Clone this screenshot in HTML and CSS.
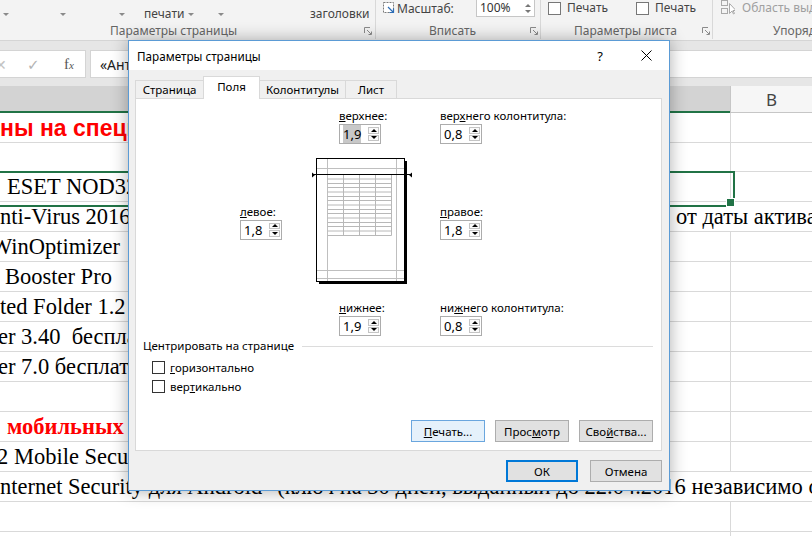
FILE: index.html
```html
<!DOCTYPE html>
<html lang="ru">
<head>
<meta charset="utf-8">
<title>Параметры страницы</title>
<link rel="stylesheet" href="styles.css">
</head>
<body>
<div class="app">
  <div class="ribbon">
    <div class="rg g1">
      <div class="rtop g1top">
        <span><i class="caret"></i></span>
        <span><i class="caret"></i></span>
        <span><i class="caret"></i></span>
        <span>печати <i class="caret"></i></span>
        <span><i class="caret"></i></span>
        <span>заголовки</span>
      </div>
      <div class="rlab g1lab"><span>Параметры страницы</span><svg class="launch" width="8" height="8" viewBox="0 0 8 8"><path d="M0.5 6V0.5H6" fill="none" stroke="#8a8a8a"/><path d="M3 3l4 4M7.5 4.5v3h-3" fill="none" stroke="#8a8a8a"/></svg></div>
    </div>
    <div class="rg g2">
      <div class="rtop g2top">
        <svg class="zicon" width="13" height="14" viewBox="0 0 13 14"><rect x="0.5" y="1.5" width="10" height="10" fill="#fff" stroke="#7a7a7a" stroke-dasharray="2 1"/><path d="M5 6l5 5M10.5 7.5v4h-4" fill="none" stroke="#2b6cb5" stroke-width="1.2"/></svg>
        <span class="ztxt">Масштаб:</span>
        <span class="zbox">100%<span class="zspin"><i class="tup"></i><i class="tdn"></i></span></span>
      </div>
      <div class="rlab g2lab"><span>Вписать</span><svg class="launch" width="8" height="8" viewBox="0 0 8 8"><path d="M0.5 6V0.5H6" fill="none" stroke="#8a8a8a"/><path d="M3 3l4 4M7.5 4.5v3h-3" fill="none" stroke="#8a8a8a"/></svg></div>
    </div>
    <div class="rg g3">
      <div class="rtop g3top">
        <span class="rck"><i class="rbox"></i>Печать</span>
        <span class="rck"><i class="rbox"></i>Печать</span>
      </div>
      <div class="rlab g3lab"><span>Параметры листа</span><svg class="launch" width="8" height="8" viewBox="0 0 8 8"><path d="M0.5 6V0.5H6" fill="none" stroke="#8a8a8a"/><path d="M3 3l4 4M7.5 4.5v3h-3" fill="none" stroke="#8a8a8a"/></svg></div>
    </div>
    <div class="rg g4">
      <div class="rtop g4top">
        <svg width="14" height="15" viewBox="0 0 14 15"><rect x="0.5" y="0.5" width="6" height="5" fill="none" stroke="#a8a8a8"/><rect x="0.5" y="8.5" width="6" height="5" fill="none" stroke="#a8a8a8"/><path d="M8.5 3.5v10l2.5-2.5 1.5 3 1-0.5-1.5-3h3z" fill="#fff" stroke="#a8a8a8"/></svg>
        <span class="dis">Область выделения</span>
      </div>
      <div class="rlab g4lab"><span>Упорядочение</span></div>
    </div>
  </div>

  <div class="fbar">
    <div class="fbtns">
      <span class="fxx">✕</span>
      <span class="fxok">✓</span>
      <span class="fxf"><i>f</i><i class="fxs">x</i></span>
    </div>
    <div class="finput">«Антивирусы»</div>
  </div>

  <div class="sheet">
    <div class="hdr"><div class="hA"></div><div class="hB">B</div></div>
    <div class="row r1"><div class="cA redsans">ны на специальные цены</div><div class="cB"></div></div>
    <div class="row r2"><div class="cA"></div><div class="cB"></div></div>
    <div class="row sel"><div class="cA ind7">ESET NOD32 Антивирус</div><div class="cB"></div></div>
    <div class="row"><div class="cA"><span class="lead">nti-Virus 2016</span>от даты активации</div><div class="cB nob"></div></div>
    <div class="row"><div class="cA neg9">WinOptimizer</div><div class="cB"></div></div>
    <div class="row"><div class="cA ind5">Booster Pro</div><div class="cB"></div></div>
    <div class="row"><div class="cA">ted Folder 1.2</div><div class="cB"></div></div>
    <div class="row"><div class="cA neg2">er 3.40&nbsp; бесплатно</div><div class="cB"></div></div>
    <div class="row"><div class="cA neg2">er 7.0 бесплатно</div><div class="cB"></div></div>
    <div class="row"><div class="cA"></div><div class="cB"></div></div>
    <div class="row"><div class="cA redserif ind7">мобильных</div><div class="cB"></div></div>
    <div class="row"><div class="cA neg3">2 Mobile Security</div><div class="cB"></div></div>
    <div class="row"><div class="cA">nternet Security для Android" (ключ на 30 дней, выданный до 22.04.2016 независимо от</div><div class="cB nob"></div></div>
    <div class="row"><div class="cA"></div><div class="cB"></div></div>
    <div class="row"><div class="cA"></div><div class="cB"></div></div>
  </div>

  <div class="dlg">
    <div class="dtitle">
      <span class="dt">Параметры страницы</span>
      <span class="dhelp">?</span>
      <span class="dclose"><svg width="11" height="11" viewBox="0 0 11 11"><path d="M0.5 0.5l10 10M10.5 0.5l-10 10" stroke="#000" stroke-width="1"/></svg></span>
    </div>
    <div class="dbody">
      <div class="tabs">
        <div class="tab t1">Страница</div>
        <div class="tab t2 on">Поля</div>
        <div class="tab t3">Колонтитулы</div>
        <div class="tab t4">Лист</div>
      </div>
      <div class="panel">
        <div class="mgrid">
          <div class="fld ftop">
            <div class="lbl"><u>в</u>ерхнее:</div>
            <div class="spin"><span class="val"><span class="hl">1,9</span></span><span class="arr"><i class="up"></i><i class="dn"></i></span></div>
          </div>
          <div class="fld fhtop">
            <div class="lbl">вер<u>х</u>него колонтитула:</div>
            <div class="spin"><span class="val">0,8</span><span class="arr"><i class="up"></i><i class="dn"></i></span></div>
          </div>
          <div class="fld fleft">
            <div class="lbl"><u>л</u>евое:</div>
            <div class="spin"><span class="val">1,8</span><span class="arr"><i class="up"></i><i class="dn"></i></span></div>
          </div>
          <svg class="pv" width="100" height="128" viewBox="0 0 100 128">
            <rect x="93" y="3" width="2" height="123" fill="#000"/>
            <rect x="7" y="124" width="88" height="2" fill="#000"/>
            <rect x="4.5" y="0.5" width="88" height="123" fill="#fff" stroke="#000"/>
            <path d="M15.5 1v122M84.5 1v122M5 10.5h87M5 112.5h87M5 120.5h87" stroke="#bfbfbf" fill="none"/>
            <path d="M31.5 17v60.5M47.5 17v60.5M63.5 17v60.5M79.5 17v60.5M15.5 21h64M15.5 25.5h64M15.5 29.5h64M15.5 34h64M15.5 38.5h64M15.5 42.5h64M15.5 47h64M15.5 51.5h64M15.5 55.5h64M15.5 60h64M15.5 64.5h64M15.5 68.5h64M15.5 73h64M15.5 77.5h64" stroke="#b8b8b8" fill="none"/>
            <path d="M1 16.5h98" stroke="#000" fill="none"/>
            <path d="M0 14.5l3 2.5-3 2.5z" fill="#000"/>
            <path d="M100 14.5l-3 2.5 3 2.5z" fill="#000"/>
          </svg>
          <div class="fld fright">
            <div class="lbl"><u>п</u>равое:</div>
            <div class="spin"><span class="val">1,8</span><span class="arr"><i class="up"></i><i class="dn"></i></span></div>
          </div>
          <div class="fld fbot">
            <div class="lbl"><u>н</u>ижнее:</div>
            <div class="spin"><span class="val">1,9</span><span class="arr"><i class="up"></i><i class="dn"></i></span></div>
          </div>
          <div class="fld fhbot">
            <div class="lbl">ни<u>ж</u>него колонтитула:</div>
            <div class="spin"><span class="val">0,8</span><span class="arr"><i class="up"></i><i class="dn"></i></span></div>
          </div>
        </div>
        <div class="cgroup">Центрировать на странице</div>
        <div class="chk"><i class="cbox"></i><span><u>г</u>оризонтально</span></div>
        <div class="chk"><i class="cbox"></i><span>вер<u>т</u>икально</span></div>
        <div class="pbtns">
          <div class="btn hot"><span><u>П</u>ечать...</span></div>
          <div class="btn"><span>Прос<u>м</u>отр</span></div>
          <div class="btn"><span>Сво<u>й</u>ства...</span></div>
        </div>
      </div>
      <div class="dbtns">
        <div class="btn wide def">ОК</div>
        <div class="btn wide">Отмена</div>
      </div>
    </div>
  </div>
</div>
</body>
</html>
```
FILE: styles.css
```css
* { box-sizing: border-box; }
html, body { margin: 0; padding: 0; }
body {
  width: 812px; height: 536px; overflow: hidden; background: #fff;
  font-family: "Noto Sans", "DejaVu Sans", sans-serif; font-size: 12px; color: #000;
}
.app { position: relative; width: 812px; height: 536px; overflow: hidden; }
i { font-style: normal; }

/* ---------- ribbon ---------- */
.ribbon {
  display: flex; height: 41px; background: #f3f3f3; overflow: hidden;
  border-bottom: 1px solid #d5d5d5; color: #444;
}
.rg { flex-shrink: 0; height: 39px; display: flex; flex-direction: column; border-right: 1px solid #d8d8d8; }
.g1 { width: 376px; }
.g2 { width: 165px; }
.g3 { width: 172px; }
.g4 { flex: 1 1 auto; min-width: 0; overflow: hidden; border-right: 0; }
.rtop { height: 23px; display: flex; }
.rlab { height: 16px; line-height: 16px; display: flex; align-items: center; color: #666; }
.launch { display: block; }

.g1top {
  display: grid; grid-template-columns: 57px 59px 25px 74px 92px auto;
  padding: 4px 0 0 3px; line-height: 17px; align-items: center;
}
.caret {
  display: inline-block; width: 0; height: 0; vertical-align: middle;
  border-left: 3px solid transparent; border-right: 3px solid transparent; border-top: 3px solid #8a8a8a;
}
.g1lab { padding: 0 3px 0 110px; justify-content: space-between; }

.g2top { align-items: flex-start; padding-left: 7px; line-height: 17px; }
.zicon { margin-top: 1px; margin-right: 1px; flex-shrink: 0; }
.zbox {
  margin-left: auto; margin-right: 5px; width: 59px; height: 17px; flex-shrink: 0;
  background: #fff; border: 1px solid #c6c6c6; border-top: 0;
  padding-left: 3px; line-height: 16px; display: flex; color: #333;
}
.zspin { margin-left: auto; width: 9px; display: flex; flex-direction: column; justify-content: center; gap: 3px; }
.tup, .tdn { display: block; width: 0; height: 0; border-left: 3px solid transparent; border-right: 3px solid transparent; }
.tup { border-bottom: 3px solid #777; }
.tdn { border-top: 3px solid #777; }
.g2lab { padding: 0 2px 0 53px; justify-content: space-between; }

.g3top { display: grid; grid-template-columns: 88px auto; padding-left: 7px; line-height: 16px; align-items: start; }
.rck { display: flex; align-items: center; }
.rbox { display: block; width: 13px; height: 13px; background: #fff; border: 1px solid #777; margin-right: 6px; }
.g3lab { padding: 0 2px 0 33px; justify-content: space-between; }

.g4top { padding-left: 8px; align-items: flex-start; line-height: 16px; gap: 7px; white-space: nowrap; }
.g4top svg { flex-shrink: 0; }
.dis { color: #a0a0a0; }
.g4lab { padding-left: 60px; white-space: nowrap; }

/* ---------- formula bar ---------- */
.fbar { height: 45px; background: #e6e6e6; display: flex; gap: 4px; padding: 9px 0 8px; }
.fbtns {
  width: 86px; flex-shrink: 0; background: #fff; border: 1px solid #d4d4d4; border-left: 0;
  display: flex; align-items: center;
}
.fxx { color: #c4c4c4; font-size: 14px; margin-left: -5px; width: 32px; }
.fxok { color: #b4b4b4; font-size: 15px; width: 37px; }
.fxf { font-family: "Liberation Serif", serif; color: #555; font-size: 15px; font-style: italic; }
.fxf .fxs { font-size: 11px; font-style: italic; }
.finput {
  flex: 1; background: #fff; border: 1px solid #d4d4d4; border-right: 0;
  padding-left: 9px; display: flex; align-items: center; font-size: 14px; color: #222;
}

/* ---------- sheet ---------- */
.hdr { display: flex; height: 27px; }
.hA { width: 730px; background: #d3d3d3; border-bottom: 2px solid #217346; }
.hB {
  flex: 1; background: #f6f6f6; border-left: 1px solid #c6c6c6; border-bottom: 1px solid #c6c6c6;
  display: flex; align-items: center; justify-content: center; font-size: 17px; color: #444;
}
.row { display: flex; height: 30px; border-bottom: 1px solid #d9d9d9; position: relative; }
.r2 { height: 29px; }
.cA {
  width: 730px; flex-shrink: 0; white-space: nowrap; overflow: visible;
  font-family: "Liberation Serif", serif; font-size: 22.5px; line-height: 29px; color: #000;
}
.cB { flex: 1; border-left: 1px solid #d9d9d9; }
.cB.nob { border-left-color: transparent; }
.redsans {
  font-family: "Liberation Sans", sans-serif; font-weight: bold; color: #f00;
  font-size: 23px; line-height: 27px; padding-top: 2px;
}
.redserif { font-weight: bold; color: #f00; }
.ind7 { padding-left: 7px; }
.ind5 { padding-left: 5px; }
.neg9 { text-indent: -9px; }
.neg2 { text-indent: -2px; }
.neg3 { text-indent: -3px; }
.lead { display: inline-block; width: 676px; }
.sel::after {
  content: ""; position: absolute; left: -5px; top: -1px; width: 736px; height: 32px;
  border: 2px solid #217346;
}
.sel::before {
  content: ""; position: absolute; left: 726px; top: 26px; width: 7px; height: 7px;
  background: #217346; border: 1px solid #fff; z-index: 1;
}

/* ---------- dialog ---------- */
.dlg {
  position: absolute; left: 128px; top: 40px; width: 542px; height: 451px;
  border: 1px solid #5b9bd5; background: #f0f0f0; font-size: 11.5px;
  box-shadow: 0 0 16px rgba(0, 0, 0, 0.32);
  display: flex; flex-direction: column; z-index: 5;
}
.dtitle { height: 29px; background: #fff; display: flex; align-items: center; padding-left: 8px; }
.dt { font-size: 11.7px; }
.dhelp { margin-left: auto; width: 46px; text-align: center; font-size: 13px; }
.dclose { width: 46px; display: flex; justify-content: center; }
.dclose svg { display: block; }

.dbody { flex: 1; padding: 6px 7px 8px 6px; display: flex; flex-direction: column; }
.tabs { display: flex; height: 22px; align-items: flex-end; position: relative; z-index: 1; }
.tab {
  height: 18px; border: 1px solid #d9d9d9; border-bottom: 0; margin-right: -1px;
  display: flex; align-items: center; justify-content: center; background: #f0f0f0;
}
.tab.on { height: 23px; background: #fff; margin-bottom: -1px; padding-bottom: 3px; position: relative; z-index: 2; }
.t1 { width: 69px; }
.t2 { width: 57px; }
.t3 { width: 87px; }
.t4 { width: 52px; }

.panel {
  height: 353px; background: #fff; border: 1px solid #d9d9d9;
  display: flex; flex-direction: column; padding: 10px 8px 8px 7px;
}
.mgrid {
  display: grid;
  grid-template-columns: 97px 72px 100px 28px 1fr;
  grid-template-rows: 35px 14px 128px 15px 35px;
}
.fld { display: flex; flex-direction: column; }
.lbl { height: 14px; line-height: 14px; margin-bottom: 1px; white-space: nowrap; }
.ftop { grid-column: 3; grid-row: 1; padding-left: 27px; }
.fhtop { grid-column: 5; grid-row: 1; }
.fleft { grid-column: 2; grid-row: 3; align-self: center; }
.pv { grid-column: 3; grid-row: 3; display: block; }
.fright { grid-column: 5; grid-row: 3; align-self: center; }
.fbot { grid-column: 3; grid-row: 5; padding-left: 27px; }
.fhbot { grid-column: 5; grid-row: 5; }

.spin {
  width: 42px; height: 20px; border: 1px solid #acacac; background: #fff;
  display: flex; align-items: center; padding-left: 3px;
}
.val { font-size: 13px; line-height: 14px; }
.hl { background: #c8c8c8; }
.arr { margin-left: auto; height: 100%; display: flex; flex-direction: column; gap: 1px; padding: 2px 1px 2px 0; }
.arr i {
  width: 11px; flex: 1; border: 1px solid #c4c4c4; background: #fafafa;
  display: flex; align-items: center; justify-content: center;
}
.arr i::before { content: ""; width: 0; height: 0; border-left: 3px solid transparent; border-right: 3px solid transparent; }
.arr .up::before { border-bottom: 3px solid #000; }
.arr .dn::before { border-top: 3px solid #000; }

.cgroup { margin-top: 3px; height: 14px; line-height: 14px; display: flex; align-items: center; white-space: nowrap; }
.cgroup::after { content: ""; flex: 1; height: 1px; background: #dcdcdc; margin-left: 8px; }
.chk { height: 19px; display: flex; align-items: center; padding-left: 9px; }
.cbox { display: block; width: 13px; height: 13px; border: 1px solid #333; background: #fff; margin-right: 5px; }
.cgroup + .chk { margin-top: 5px; }

.pbtns { margin-top: auto; display: flex; justify-content: flex-end; gap: 10px; }
.btn {
  width: 74px; height: 22px; border: 1px solid #adadad; background: #e1e1e1;
  display: flex; align-items: center; justify-content: center; white-space: nowrap;
}
.btn.hot { background: #e5f1fb; border-color: #6aa6de; }
.dbtns { margin-top: 9px; display: flex; justify-content: flex-end; gap: 12px; }
.btn.wide { width: 72px; }
.btn.def { border: 2px solid #0078d7; }
```
